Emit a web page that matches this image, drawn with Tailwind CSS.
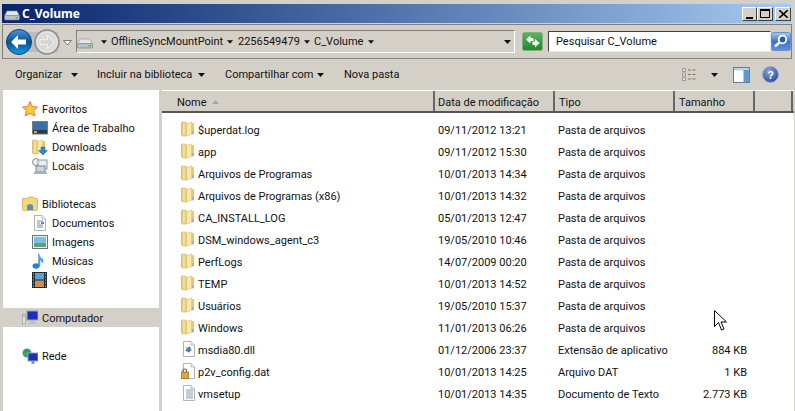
<!DOCTYPE html>
<html lang="pt">
<head>
  <meta charset="UTF-8" />
  <title>C_Volume</title>
  <script src="https://cdn.jsdelivr.net/npm/@tailwindcss/browser@4"></script>
</head>
<body class="bg-[#d4d0c8] text-[#111] font-['Roboto','Noto_Sans',sans-serif] text-[11px] overflow-hidden">
  <svg width="0" height="0" class="absolute">
    <defs>
      <linearGradient id="fold" x1="0" x2="1" y1="0" y2="0"><stop offset="0" stop-color="#d9b85c"/><stop offset=".45" stop-color="#f8e59c"/><stop offset="1" stop-color="#e2c46c"/></linearGradient>
      <symbol id="folder" viewBox="0 0 13 16">
        <path d="M.5 2q0-1 1-1h3l1 1v13H2Q.5 15 .5 13.500z" fill="url(#fold)" stroke="#cfae58" stroke-width=".6"/>
        <path d="M5.500 2.500l5-1.500v12.500l-5 1.500z" fill="#f7e9ae" stroke="#d6bb70" stroke-width=".6"/>
        <path d="M10.500 2H12.500q.5 0 .5.500V13l-2.500.5z" fill="#e4c76e"/>
        <path d="M11 10h2v3l-2 .5z" fill="#8fb7da"/>
      </symbol>
      <symbol id="drive" viewBox="0 0 16 12">
        <path d="M3 2h10l2.500 5H.5z" fill="#e4e7ea" stroke="#8b9298" stroke-width=".6"/>
        <rect x=".5" y="6.500" width="15" height="4.500" rx="1" fill="#b9c0c7" stroke="#6f777e" stroke-width=".6"/>
        <rect x="11.500" y="8" width="2.500" height="1.500" fill="#4fc04a"/>
      </symbol>
      <symbol id="page" viewBox="0 0 16 16">
        <path d="M2.500.500h7.500l3.500 3.500v11.500H2.500z" fill="#fff" stroke="#9aa1aa" stroke-width=".8"/>
        <path d="M10 .500v3.500h3.500" fill="#e6eaee" stroke="#9aa1aa" stroke-width=".6"/>
      </symbol>
      <symbol id="arrow" viewBox="0 0 7 4"><path d="M0 0h7L3.500 4z" fill="#111"/></symbol>
    </defs>
  </svg>

  <div class="h-[4px]"></div>

  <!-- barra de titulo -->
  <div class="h-[19px] ml-[2px] mr-[4px] flex items-center pl-[2px] bg-gradient-to-r from-[#0a246a] to-[#a6caf0]">
    <svg class="w-[16px] h-[12px] mt-[3px]"><use href="#drive"/></svg>
    <span class="ml-[2px] text-white font-bold text-[12px] font-['Noto_Sans',sans-serif]">C_Volume</span>
    <div class="ml-auto flex items-center">
      <div class="w-[15px] h-[14px] bg-[#d4d0c8] border border-t-white border-l-white border-r-[#404040] border-b-[#404040] flex items-end pl-[3px] pb-[1px]"><div class="w-[7px] h-[2px] bg-black"></div></div>
      <div class="w-[16px] h-[14px] bg-[#d4d0c8] border border-t-white border-l-white border-r-[#404040] border-b-[#404040] flex items-center justify-center"><div class="w-[10px] h-[9px] border border-black border-t-2"></div></div>
      <div class="ml-[2px] w-[16px] h-[14px] bg-[#d4d0c8] border border-t-white border-l-white border-r-[#404040] border-b-[#404040] flex items-center justify-center">
        <svg width="9" height="8" viewBox="0 0 9 8"><path d="M0 0l9 8M9 0L0 8" stroke="#000" stroke-width="1.600"/></svg>
      </div>
    </div>
  </div>

  <!-- navegacao -->
  <div class="h-[35px] mt-[1px] ml-[2px] mr-[3px] border border-[#808080] flex items-center">
    <div class="relative w-[66px] h-[28px] ml-[3px] flex items-center">
      <div class="absolute left-[12px] w-[40px] h-[20px] bg-[#bdbdbd]"></div>
      <svg class="absolute left-0 top-[1px]" width="26" height="26" viewBox="0 0 26 26">
        <defs><linearGradient id="back" x1="0" x2="0" y1="0" y2="1"><stop offset="0" stop-color="#4a98d4"/><stop offset=".5" stop-color="#0a4f96"/><stop offset="1" stop-color="#12a0e0"/></linearGradient></defs>
        <circle cx="13" cy="13" r="12.500" fill="url(#back)" stroke="#0c3f73"/>
        <path d="M5 13l7-7v4.500h8v5h-8v4.500z" fill="#fff"/>
      </svg>
      <svg class="absolute left-[28px] top-[1px]" width="26" height="26" viewBox="0 0 26 26">
        <circle cx="13" cy="13" r="12" fill="#d4d4d4" stroke="#8c8c8c" stroke-width="1.500"/>
        <circle cx="13" cy="13" r="10" fill="#dadada" stroke="#ececec"/>
        <path d="M20 13l-6.500-6.500v4.200H6v4.600h7.500v4.200z" fill="#d4d4d4" stroke="#f2f2f2"/>
      </svg>
      <svg class="absolute left-[57px] top-[12px]" width="9" height="6" viewBox="0 0 9 6"><path d="M.5.500h8L4.500 5z" fill="#f2f2f2" stroke="#777"/></svg>
    </div>
    <div class="ml-[4px] w-[439px] h-[23px] border border-t-[#808080] border-l-[#808080] border-r-white border-b-white flex items-center">
      <svg class="w-[16px] h-[12px] mt-[2px] shrink-0"><use href="#drive"/></svg>
      <svg class="ml-[8px] shrink-0 w-[6px] h-[4px]"><use href="#arrow"/></svg>
      <span class="ml-[4px] pt-[2px] w-[116px] shrink-0 whitespace-nowrap">OfflineSyncMountPoint</span>
      <svg class="shrink-0 w-[6px] h-[4px]"><use href="#arrow"/></svg>
      <span class="ml-[5px] pt-[2px] w-[66px] shrink-0">2256549479</span>
      <svg class="shrink-0 w-[6px] h-[4px]"><use href="#arrow"/></svg>
      <span class="ml-[4px] pt-[2px] w-[54px] shrink-0">C_Volume</span>
      <svg class="shrink-0 w-[6px] h-[4px]"><use href="#arrow"/></svg>
      <svg class="ml-auto mr-[3px] shrink-0 w-[7px] h-[4px]"><use href="#arrow"/></svg>
    </div>
    <svg class="ml-[7px]" width="21" height="19" viewBox="0 0 21 19">
      <defs><linearGradient id="grn" x1="0" x2="0" y1="0" y2="1"><stop offset="0" stop-color="#55b855"/><stop offset="1" stop-color="#1f8a2a"/></linearGradient></defs>
      <rect x=".5" y=".5" width="20" height="18" rx="2" fill="url(#grn)" stroke="#8aa88a"/>
      <path d="M4 7.500L8.500 3.500v2.500h3v3h-3v2.500z" fill="#fff"/>
      <path d="M17.500 10L13 14.500V12h-2.500V8.500H13V6z" fill="#fff" transform="translate(0 1)"/>
    </svg>
    <div class="ml-[5px] w-[223px] h-[21px] bg-white border border-t-[#404040] border-l-[#404040] border-r-[#e8e8e8] border-b-[#e8e8e8] pl-[7px] pt-[2px] flex items-center">Pesquisar C_Volume</div>
    <svg width="20" height="19" viewBox="0 0 20 19">
      <defs><linearGradient id="srch" x1="0" x2="0" y1="0" y2="1"><stop offset="0" stop-color="#a8ccf4"/><stop offset=".5" stop-color="#3a74c8"/><stop offset="1" stop-color="#5a94dc"/></linearGradient></defs>
      <rect x=".5" y=".5" width="19" height="18" rx="2" fill="url(#srch)" stroke="#6a90c0"/>
      <circle cx="11.500" cy="7.500" r="3.800" fill="#2a5aa8" stroke="#fff" stroke-width="1.800"/>
      <path d="M8.500 10.500l-4.500 4" stroke="#fff" stroke-width="2.400"/>
    </svg>
  </div>

  <!-- barra de comandos -->
  <div class="h-[31px] flex items-center pl-[15px] pr-[16px]">
    <span class="pt-[2px] w-[56px] shrink-0">Organizar</span><svg class="shrink-0 w-[7px] h-[4px]"><use href="#arrow"/></svg>
    <span class="ml-[19px] pt-[2px] w-[101px] shrink-0 whitespace-nowrap">Incluir na biblioteca</span><svg class="shrink-0 w-[7px] h-[4px]"><use href="#arrow"/></svg>
    <span class="ml-[20px] pt-[2px] w-[92px] shrink-0 whitespace-nowrap">Compartilhar com</span><svg class="shrink-0 w-[7px] h-[4px]"><use href="#arrow"/></svg>
    <span class="ml-[20px] pt-[2px] whitespace-nowrap">Nova pasta</span>
    <div class="ml-auto flex items-center">
      <svg width="15" height="13" viewBox="0 0 15 13"><path d="M.5.5h3v3h-3zM.5 5h3v3h-3zM.5 9.500h3v3h-3z" fill="#fff" stroke="#777" stroke-width=".7"/><path d="M1.500 2h1M1.500 6.500h1M1.500 11h1" stroke="#d66"/><path d="M6 2h3M10.500 2h3M6 6.500h3M10.500 6.500h3M6 11h3M10.500 11h3" stroke="#777"/></svg>
      <svg class="ml-[14px] w-[7px] h-[4px]"><use href="#arrow"/></svg>
      <svg class="ml-[15px]" width="17" height="16" viewBox="0 0 17 16"><rect x=".5" y=".5" width="16" height="15" fill="#fff" stroke="#5f7f9f"/><rect x="1" y="1" width="15" height="2.500" fill="#b8d2ea"/><rect x="10.500" y="3" width="5.500" height="12" fill="#5e9bd2"/></svg>
      <svg class="ml-[12px]" width="17" height="17" viewBox="0 0 17 17">
        <defs><radialGradient id="help" cx=".4" cy=".3" r=".8"><stop offset="0" stop-color="#8aa8e0"/><stop offset="1" stop-color="#1f3f94"/></radialGradient></defs>
        <circle cx="8.500" cy="8.500" r="8" fill="url(#help)" stroke="#9cb0d0"/>
        <text x="8.500" y="12.500" text-anchor="middle" fill="#fff" font-size="11" font-weight="700" font-family="Liberation Sans">?</text>
      </svg>
    </div>
  </div>

  <!-- area principal -->
  <div class="h-[321px] flex pl-[3px] pr-[1px]">
    <nav class="w-[156px] bg-white pt-[9px] shrink-0" id="tree"></nav>
    <div class="ml-[3px] flex-1 bg-white min-w-0">
      <div class="h-[23px] bg-[#d4d0c8] border-b-2 border-b-[#555] border-t border-t-white flex items-stretch">
        <div class="w-[273px] pl-[15px] pt-[4px] flex items-center border-r-2 border-r-[#666]">Nome<svg class="ml-[5px] mb-[3px]" width="7" height="4" viewBox="0 0 7 4"><path d="M0 4l3.500-4L7 4z" fill="#a8a8a8"/></svg></div>
        <div class="w-[120px] pl-[3px] pt-[4px] flex items-center border-r-2 border-r-[#666]">Data de modificação</div>
        <div class="w-[120px] pl-[4px] pt-[4px] flex items-center border-r-2 border-r-[#666]">Tipo</div>
        <div class="w-[80px] pl-[4px] pt-[4px] flex items-center border-r-2 border-r-[#666]">Tamanho</div>
        <div class="w-[38px] border-r-2 border-r-[#666]"></div>
      </div>
      <div class="pt-[6px]" id="files"></div>
    </div>
  </div>

  <!-- cursor -->
  <svg class="absolute left-[714px] top-[310px]" width="13" height="22" viewBox="0 0 13 22"><path d="M.5.500v16l4-4 3 7.500 2.500-1-3-7h5.500z" fill="#fff" stroke="#000"/></svg>

  <script>
    const icons = {
      star: '<svg width="16" height="16" viewBox="0 0 16 16"><path d="M8 .5l2.300 5 5.200.6-3.900 3.500 1.100 5.400L8 12.300 3.300 15l1.100-5.400L.5 6.100l5.200-.6z" fill="#fbc93c" stroke="#e8793a"/></svg>',
      desktop: '<svg width="16" height="14" viewBox="0 0 16 14"><rect x=".5" y=".5" width="15" height="12.500" fill="#3c6ea8" stroke="#6d7e92"/><rect x="1" y="9" width="14" height="3.500" fill="#2a3a4a"/><path d="M2 11h3" stroke="#e2a23c" stroke-width="2"/></svg>',
      downloads: '<svg width="16" height="16" viewBox="0 0 16 16"><use href="#folder" width="13" height="16"/><path d="M9 8h4v3.500h2.500L11 16l-4.500-4.500H9z" fill="#2f8ad6" stroke="#1c5fa5" stroke-width=".5"/></svg>',
      recent: '<svg width="16" height="16" viewBox="0 0 16 16"><circle cx="4" cy="4" r="3.500" fill="#eee" stroke="#888"/><rect x="6" y="2" width="9" height="9" fill="#e8eef4" stroke="#8b99a8"/><rect x="4" y="8" width="9" height="6" fill="#c8d4de" stroke="#7a8794"/><rect x="2" y="14" width="13" height="2" fill="#a8b4be"/></svg>',
      lib: '<svg width="16" height="15" viewBox="0 0 16 15"><path d="M.5 2.500h5l1-1.500h5l1 1.500h3v11q0 1-1 1h-13q-1 0-1-1z" fill="#f4d67c" stroke="#c9a850" stroke-width=".7"/><path d="M5 14v-4.500q3-3 6 0V14z" fill="#4f8fd2"/></svg>',
      doc: '<svg width="16" height="16" viewBox="0 0 16 16"><use href="#page"/><path d="M5 6h6M5 8h3M5 10h6M5 12h6" stroke="#7d8a98"/><rect x="9" y="7" width="3" height="2" fill="#4a8ad0"/></svg>',
      img: '<svg width="16" height="14" viewBox="0 0 16 14"><rect x=".5" y=".5" width="15" height="13" fill="#e8f0f4" stroke="#6a7680"/><rect x="2" y="2" width="12" height="6" fill="#7fc0e0"/><rect x="2" y="8" width="12" height="4" fill="#5f9f7f"/></svg>',
      music: '<svg width="14" height="16" viewBox="0 0 14 16"><ellipse cx="4" cy="13" rx="3.500" ry="2.700" fill="#2f80cc"/><path d="M6.500 13V.5q.5 3 4 5.500 1 2 0 4-1-3-2.500-3.500V13z" fill="#5ba4e0" stroke="#2f80cc" stroke-width=".5"/></svg>',
      video: '<svg width="15" height="16" viewBox="0 0 15 16"><rect width="15" height="16" fill="#1f2d36"/><rect x="3" y="1" width="9" height="6.500" fill="#5f9fd0"/><rect x="3" y="8.500" width="9" height="6.500" fill="#d08a50"/><path d="M1 2h1M1 5h1M1 8h1M1 11h1M1 14h1M13 2h1M13 5h1M13 8h1M13 11h1M13 14h1" stroke="#ddd"/></svg>',
      pc: '<svg width="16" height="15" viewBox="0 0 16 15"><rect x=".5" y="4" width="3" height="10" fill="#dde2e6" stroke="#8a949c" stroke-width=".6"/><rect x="1.500" y="5" width="1" height="2" fill="#4fc04a"/><rect x="5" y="1" width="11" height="9" fill="#1a2ec0" stroke="#9aa4ae"/><path d="M8 11h5v2h2v1H6v-1h2z" fill="#b8c0c8"/></svg>',
      net: '<svg width="16" height="16" viewBox="0 0 16 16"><circle cx="5" cy="5" r="4.500" fill="#3aa860"/><path d="M2 3q3-3 5 0-2 3-5 0z" fill="#2f80cc"/><rect x="6" y="5" width="10" height="8" fill="#1a2ec0" stroke="#9aa4ae"/><rect x="9.500" y="13" width="3" height="3" fill="#8a94a0"/></svg>',
      folder: '<svg width="13" height="16" viewBox="0 0 13 16"><use href="#folder"/></svg>',
      dll: '<svg width="16" height="16" viewBox="0 0 16 16"><use href="#page"/><path d="M5 10l4-4M7 11l3-3" stroke="#4a7aa8" stroke-width="2"/><circle cx="6" cy="7" r="1" fill="#8aa"/></svg>',
      dat: '<svg width="16" height="16" viewBox="0 0 16 16"><use href="#page"/><rect x="0" y="9" width="7.500" height="6.500" fill="#d8a838" stroke="#8a6a18" stroke-width=".7"/><path d="M2 9V7q1.700-2 3.500 0v2" fill="none" stroke="#7a6a4a" stroke-width="1.200"/></svg>',
      txt: '<svg width="16" height="16" viewBox="0 0 16 16"><use href="#page"/><path d="M5 5h7M5 7h7M5 9h7M5 11h7M5 13h7" stroke="#8a9aaa"/></svg>'
    };

    // painel esquerdo: indent 0 = grupo, 1 = item
    const tree = [
      ["star", "Favoritos", 0], ["desktop", "Área de Trabalho", 1], ["downloads", "Downloads", 1], ["recent", "Locais", 1], null,
      ["lib", "Bibliotecas", 0], ["doc", "Documentos", 1], ["img", "Imagens", 1], ["music", "Músicas", 1], ["video", "Vídeos", 1], null,
      ["pc", "Computador", 0, true], null,
      ["net", "Rede", 0]
    ];
    document.getElementById("tree").innerHTML = tree.map(t => {
      if (!t) return '<div class="h-[19px]"></div>';
      const pad = t[2] ? "pl-[29px]" : "pl-[19px]";
      const sel = t[3] ? "bg-[#d4d0c8]" : "";
      return `<div class="h-[19px] flex items-center ${pad} ${sel}"><span class="w-[20px] shrink-0 flex items-center">${icons[t[0]]}</span><span class="pt-[3px] whitespace-nowrap">${t[1]}</span></div>`;
    }).join("");

    const pasta = "Pasta de arquivos";
    const files = [
      ["folder", "$uperdat.log", "09/11/2012 13:21", pasta, ""],
      ["folder", "app", "09/11/2012 15:30", pasta, ""],
      ["folder", "Arquivos de Programas", "10/01/2013 14:34", pasta, ""],
      ["folder", "Arquivos de Programas (x86)", "10/01/2013 14:32", pasta, ""],
      ["folder", "CA_INSTALL_LOG", "05/01/2013 12:47", pasta, ""],
      ["folder", "DSM_windows_agent_c3", "19/05/2010 10:46", pasta, ""],
      ["folder", "PerfLogs", "14/07/2009 00:20", pasta, ""],
      ["folder", "TEMP", "10/01/2013 14:52", pasta, ""],
      ["folder", "Usuários", "19/05/2010 15:37", pasta, ""],
      ["folder", "Windows", "11/01/2013 06:26", pasta, ""],
      ["dll", "msdia80.dll", "01/12/2006 23:37", "Extensão de aplicativo", "884 KB"],
      ["dat", "p2v_config.dat", "10/01/2013 14:25", "Arquivo DAT", "1 KB"],
      ["txt", "vmsetup", "10/01/2013 14:35", "Documento de Texto", "2.773 KB"]
    ];
    document.getElementById("files").innerHTML = files.map(f => `
      <div class="h-[22px] pt-[2px] flex items-center">
        <div class="w-[276px] pl-[19px] flex items-center shrink-0"><span class="w-[17px] mb-[4px] shrink-0 flex items-center">${icons[f[0]]}</span><span class="whitespace-nowrap">${f[1]}</span></div>
        <div class="w-[120px] shrink-0">${f[2]}</div>
        <div class="w-[120px] shrink-0">${f[3]}</div>
        <div class="w-[69px] shrink-0 text-right">${f[4]}</div>
      </div>`).join("");
  </script>
</body>
</html>
